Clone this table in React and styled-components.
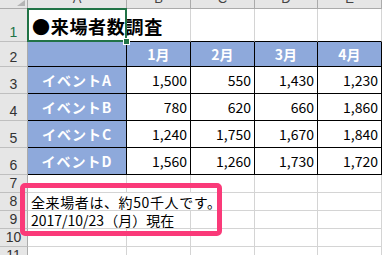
import React from "react";
import styled, { createGlobalStyle } from "styled-components";

const GlobalStyle = createGlobalStyle`
  html, body {
    margin: 0;
    padding: 0;
    background: #ffffff;
  }
`;

const months = ["1月", "2月", "3月", "4月"];
const events = [
  { name: "イベントA", counts: [1500, 550, 1430, 1230] },
  { name: "イベントB", counts: [780, 620, 660, 1860] },
  { name: "イベントC", counts: [1240, 1750, 1670, 1840] },
  { name: "イベントD", counts: [1560, 1260, 1730, 1720] },
];
const columns = ["A", "B", "C", "D", "E"];

const StyledSheet = styled.div`
  position: relative;
  width: 382px;
  height: 255px;
  overflow: hidden;
  display: grid;
  grid-template-columns: 28px 99px 64px 64px 63px 1fr;
  grid-template-rows: 9px 33px 25px repeat(4, 27px) repeat(5, 18px);
  font-family: "Noto Sans CJK JP", "Liberation Sans", sans-serif;
  color: #000;
  background: #fff;
`;

const StyledCorner = styled.div`
  position: relative;
  background: #e6e6e6;
  border-right: 1px solid #ababab;
  border-bottom: 1px solid #ababab;
  svg {
    position: absolute;
    right: 2px;
    bottom: 2px;
  }
`;

const StyledColHead = styled.div`
  box-sizing: border-box;
  display: flex;
  align-items: flex-end;
  justify-content: center;
  overflow: hidden;
  background: #e6e6e6;
  border-right: 1px solid #ababab;
  border-bottom: 1px solid #ababab;
  font-family: "Liberation Sans", sans-serif;
  font-size: 13px;
  line-height: 13px;
  padding-bottom: 3px;
  color: #444;
`;

const StyledRowHead = styled.div`
  box-sizing: border-box;
  display: flex;
  align-items: flex-end;
  justify-content: center;
  background: #e6e6e6;
  border-right: 1px solid #ababab;
  border-bottom: 1px solid #bfbfbf;
  font-family: "Liberation Sans", sans-serif;
  font-size: 14px;
  line-height: 14px;
  padding-bottom: 2px;
  color: ${(p) => (p.$active ? "#217346" : "#333")};
`;

const isTable = (k) => k === "head" || k === "label" || k === "num";
const isBlue = (k) => k === "head" || k === "label";

const StyledCell = styled.div`
  box-sizing: border-box;
  display: flex;
  align-items: ${(p) => (p.$kind === "title" ? "flex-end" : "center")};
  justify-content: ${(p) =>
    p.$kind === "num" ? "flex-end" : isBlue(p.$kind) ? "center" : "flex-start"};
  white-space: nowrap;
  font-size: 14px;
  line-height: 16px;
  padding: 0 3px;
  letter-spacing: ${(p) => p.$spacing || (p.$kind === "label" ? "1px" : "0")};
  border-right: 1px solid ${(p) => (isTable(p.$kind) ? "#000" : "#d4d4d4")};
  border-bottom: 1px solid
    ${(p) => (isTable(p.$kind) || p.$edge ? "#000" : "#d4d4d4")};
  background: ${(p) => (isBlue(p.$kind) ? "#8ea9db" : "transparent")};
  color: ${(p) => (isBlue(p.$kind) ? "#fff" : "#000")};
  font-weight: ${(p) => (isBlue(p.$kind) || p.$kind === "title" ? 700 : 400)};
  grid-column: ${(p) => (p.$span ? `span ${p.$span}` : "auto")};
`;

const StyledTitleCell = styled(StyledCell)`
  position: relative;
  font-size: 18px;
  line-height: 20px;
  letter-spacing: 0.7px;
  padding: 0 0 5px 4px;
  border-bottom-color: #000;
  &::before {
    content: "";
    position: absolute;
    left: -1px;
    top: -1px;
    right: -1px;
    bottom: -1px;
    border: 2px solid #217346;
  }
  &::after {
    content: "";
    position: absolute;
    right: -4px;
    bottom: -4px;
    width: 5px;
    height: 5px;
    background: #217346;
    border: 1px solid #fff;
  }
`;

const StyledHighlight = styled.div`
  position: absolute;
  left: 20px;
  top: 183px;
  width: 202px;
  height: 53px;
  box-sizing: border-box;
  border: 5px solid #fa3a79;
  border-radius: 5px;
`;

const fmt = (n) => n.toLocaleString("en-US");

const BlankRow = ({ n }) => (
  <>
    <StyledRowHead>{n}</StyledRowHead>
    {columns.map((c) => (
      <StyledCell key={c} $kind="plain" />
    ))}
  </>
);

const App = () => {
  return (
    <>
      <GlobalStyle />
      <StyledSheet>
        <StyledCorner>
          <svg width="8" height="6" viewBox="0 0 8 6">
            <polygon points="8,0 8,6 0,6" fill="#b4b4b4" />
          </svg>
        </StyledCorner>
        {columns.map((c) => (
          <StyledColHead key={c}>{c}</StyledColHead>
        ))}

        {/* row 1 */}
        <StyledRowHead $active>1</StyledRowHead>
        <StyledTitleCell $kind="title">●来場者数調査</StyledTitleCell>
        {months.map((m) => (
          <StyledCell key={m} $kind="plain" $edge />
        ))}

        {/* row 2 */}
        <StyledRowHead>2</StyledRowHead>
        <StyledCell $kind="head" />
        {months.map((m) => (
          <StyledCell key={m} $kind="head">
            {m}
          </StyledCell>
        ))}

        {events.map((ev, r) => (
          <React.Fragment key={ev.name}>
            <StyledRowHead>{r + 3}</StyledRowHead>
            <StyledCell $kind="label">{ev.name}</StyledCell>
            {ev.counts.map((n, i) => (
              <StyledCell key={i} $kind="num">
                {fmt(n)}
              </StyledCell>
            ))}
          </React.Fragment>
        ))}

        <BlankRow n={7} />

        {/* row 8 */}
        <StyledRowHead>8</StyledRowHead>
        <StyledCell $kind="note" $span={3} $spacing="0.6px">
          全来場者は、約50千人です。
        </StyledCell>
        <StyledCell $kind="plain" />
        <StyledCell $kind="plain" />

        {/* row 9 */}
        <StyledRowHead>9</StyledRowHead>
        <StyledCell $kind="note" $span={2}>
          2017/10/23（月）現在
        </StyledCell>
        <StyledCell $kind="plain" />
        <StyledCell $kind="plain" />
        <StyledCell $kind="plain" />

        <BlankRow n={10} />
        <BlankRow n={11} />

        <StyledHighlight />
      </StyledSheet>
    </>
  );
};

export default App;
